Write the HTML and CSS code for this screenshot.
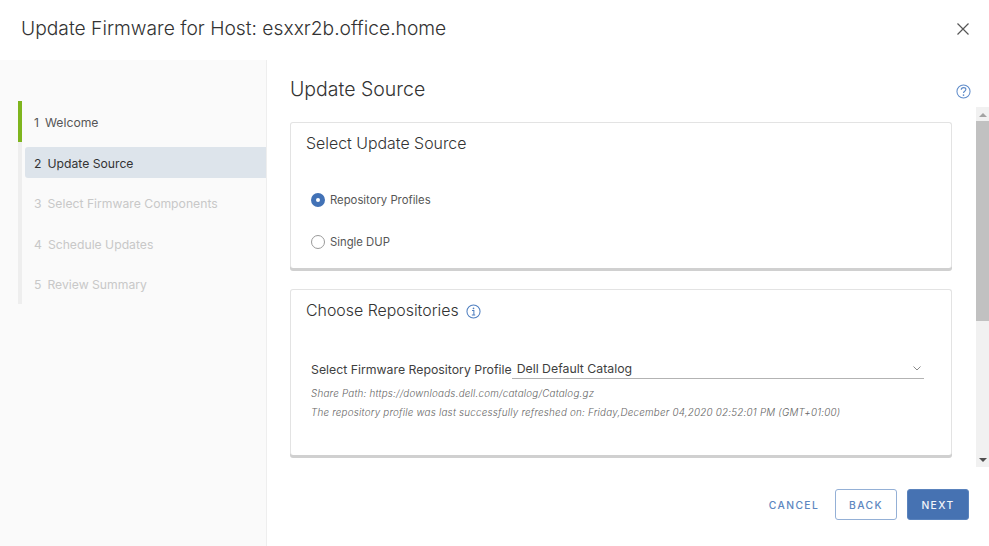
FILE: index.html
```html
<!DOCTYPE html>
<html lang="en">
<head>
<meta charset="utf-8">
<title>Update Firmware</title>
<link rel="stylesheet" href="styles.css">
</head>
<body>
<div class="dialog">
  <header class="dialog-header">
    <h1 class="dialog-title">Update Firmware for Host: esxxr2b.office.home</h1>
    <svg class="close-icon" viewBox="0 0 12 12" width="12" height="12"><path d="M.5.5l11 11M11.500.5l-11 11" fill="none" stroke="#565656" stroke-width="1.200"/></svg>
  </header>
  <div class="dialog-body">
    <nav class="sidebar">
      <ol class="steps">
        <li class="step step-done"><span class="step-label"><span class="step-num">1</span>Welcome</span></li>
        <li class="step step-active"><span class="step-label"><span class="step-num">2</span>Update Source</span></li>
        <li class="step step-off"><span class="step-label"><span class="step-num">3</span>Select Firmware Components</span></li>
        <li class="step step-off"><span class="step-label"><span class="step-num">4</span>Schedule Updates</span></li>
        <li class="step step-off"><span class="step-label"><span class="step-num">5</span>Review Summary</span></li>
      </ol>
    </nav>
    <main class="content">
      <div class="content-head">
        <h2 class="page-title">Update Source</h2>
        <svg class="help-icon" viewBox="0 0 16 16" width="15" height="15"><circle cx="8" cy="8" r="7" fill="none" stroke="#5f8cca" stroke-width="1.100"/><path d="M5.600 6.200c0-1.400 1.100-2.300 2.500-2.300s2.400.9 2.400 2c0 1.800-2.500 1.800-2.500 3.700" fill="none" stroke="#5f8cca" stroke-width="1.200"/><circle cx="8" cy="11.800" r=".9" fill="#5f8cca"/></svg>
      </div>
      <div class="scroller">
        <div class="cards">
          <section class="card card-source">
            <h3 class="card-title">Select Update Source</h3>
            <label class="radio-row radio-first"><span class="radio radio-on"></span>Repository Profiles</label>
            <label class="radio-row"><span class="radio"></span>Single DUP</label>
          </section>
          <section class="card card-repo">
            <h3 class="card-title">Choose Repositories
              <svg class="info-icon" viewBox="0 0 16 16" width="15" height="15"><circle cx="8" cy="8" r="7" fill="none" stroke="#4f7fc0" stroke-width="1.100"/><circle cx="8" cy="4.600" r=".9" fill="#4f7fc0"/><path d="M6.400 7h2v4.700M6.200 11.800h3.600" fill="none" stroke="#4f7fc0" stroke-width="1.100"/></svg>
            </h3>
            <div class="select-row">
              <span class="select-label">Select Firmware Repository Profile</span>
              <div class="select-box">
                <span>Dell Default Catalog</span>
                <svg viewBox="0 0 8 5" width="8" height="5"><path d="M.5.5L4 4 7.500.5" fill="none" stroke="#8a8a8a" stroke-width="1"/></svg>
              </div>
            </div>
            <p class="hint hint-first">Share Path: https://downloads.dell.com/catalog/Catalog.gz</p>
            <p class="hint">The repository profile was last successfully refreshed on: Friday,December 04,2020 02:52:01 PM (GMT+01:00)</p>
          </section>
        </div>
        <div class="scrollbar">
          <span class="arrow arrow-up"></span>
          <span class="thumb"></span>
          <span class="arrow arrow-down"></span>
        </div>
      </div>
      <footer class="actions">
        <button class="btn btn-link">CANCEL</button>
        <button class="btn btn-outline">BACK</button>
        <button class="btn btn-primary">NEXT</button>
      </footer>
    </main>
  </div>
</div>
</body>
</html>
```

FILE: styles.css
```css
* { box-sizing: border-box; }
html, body { margin: 0; padding: 0; background: #fff; }
body { font-family: Inter, "Noto Sans", sans-serif; color: #565656; overflow: hidden; }
.dialog { width: 989px; height: 546px; display: flex; flex-direction: column; }

.dialog-header { height: 60px; flex: none; display: flex; align-items: flex-start; justify-content: space-between; padding: 17px 20px 0 21px; }
.dialog-title { margin: 0; font-size: 19.250px; line-height: 23px; font-weight: 300; color: #333; }
.close-icon { margin-top: 6px; }

.dialog-body { flex: 1; display: flex; min-height: 0; }
.sidebar { width: 267px; flex: none; background: #fafafa; border-right: 1px solid #eee; padding: 41px 0 0 18px; }
.steps { list-style: none; margin: 0; padding: 0; }
.step { height: 40.700px; border-left: 4px solid #eee; padding: 5px 0 0 3px; font-size: 12.200px; }
.step-done { border-left-color: #7fb51e; }
.step-label { display: flex; align-items: center; height: 31px; padding: 1px 0 0 9px; border-radius: 3px 0 0 3px; }
.step-num { margin-right: 6px; }
.step-active .step-label { background: #dde4eb; color: #333; padding-top: 3px; }
.step-off .step-label { color: #c8c8c8; }

.content { flex: 1; min-width: 0; display: flex; flex-direction: column; }
.content-head { height: 47px; flex: none; display: flex; justify-content: space-between; padding: 17px 18px 0 23px; }
.page-title { margin: 0; font-size: 19.500px; line-height: 24px; font-weight: 300; color: #333; }
.help-icon { margin-top: 7px; }

.scroller { height: 360px; flex: none; display: flex; }
.cards { flex: 1; padding: 15px 24px 0 23px; }
.card { background: #fff; border: 1px solid #e3e3e3; border-bottom: 0; border-radius: 3px; box-shadow: 0 3px 0 #d0d0d0; padding: 11px 15px 0 15px; }
.card-source { height: 146px; }
.card-repo { height: 166px; margin-top: 21px; }
.card-title { margin: 0; font-size: 15.900px; line-height: 20px; font-weight: 300; color: #333; display: flex; align-items: center; }
.info-icon { margin-left: 7px; }

.radio-row { display: flex; align-items: center; height: 16px; margin: 26px 0 0 5px; font-size: 11.300px; color: #565656; }
.radio-first { margin-top: 38px; }
.radio { width: 14px; height: 14px; border-radius: 50%; border: 1px solid #9a9a9a; background: #fff; margin-right: 5px; }
.radio-on { border: 5px solid #4272b6; }

.select-row { display: flex; align-items: flex-end; margin: 38px 12px 0 5px; font-size: 12.300px; color: #3f3f3f; }
.select-label { white-space: nowrap; line-height: 19px; }
.select-box { flex: 1; height: 20px; display: flex; align-items: center; justify-content: space-between; border-bottom: 1px solid #b3b3b3; padding: 0 3px 0 5px; }
.hint { margin: 6px 0 0 5px; font-size: 9.800px; letter-spacing: .23px; line-height: 13px; font-style: italic; font-weight: 300; color: #666; white-space: nowrap; }
.hint-first { margin-top: 8px; }

.scrollbar { width: 13px; flex: none; background: #f1f1f1; display: flex; flex-direction: column; align-items: center; }
.arrow { height: 15px; flex: none; width: 0; border-left: 4px solid transparent; border-right: 4px solid transparent; }
.arrow-up { border-bottom: 4px solid #a3a3a3; height: 4px; margin: 6px 0 4px; }
.arrow-down { border-top: 4px solid #505050; height: 4px; margin-top: auto; margin-bottom: 5px; }
.thumb { width: 13px; height: 200px; background: #c1c1c1; }

.actions { flex: 1; display: flex; justify-content: flex-end; align-items: flex-start; gap: 10px; padding: 22px 20px 0 0; }
.btn { height: 31px; width: 62px; padding: 0; border-radius: 3px; font-family: inherit; font-size: 10.300px; letter-spacing: 1.400px; font-weight: 500; border: 1px solid transparent; background: none; }
.btn-link { color: #5c86c0; border-color: transparent; }
.btn-outline { color: #5c86c0; border-color: #94b0d6; background: #fff; }
.btn-primary { color: #f2f5fa; background: #4672b2; border-color: #5a83bd; }
```
